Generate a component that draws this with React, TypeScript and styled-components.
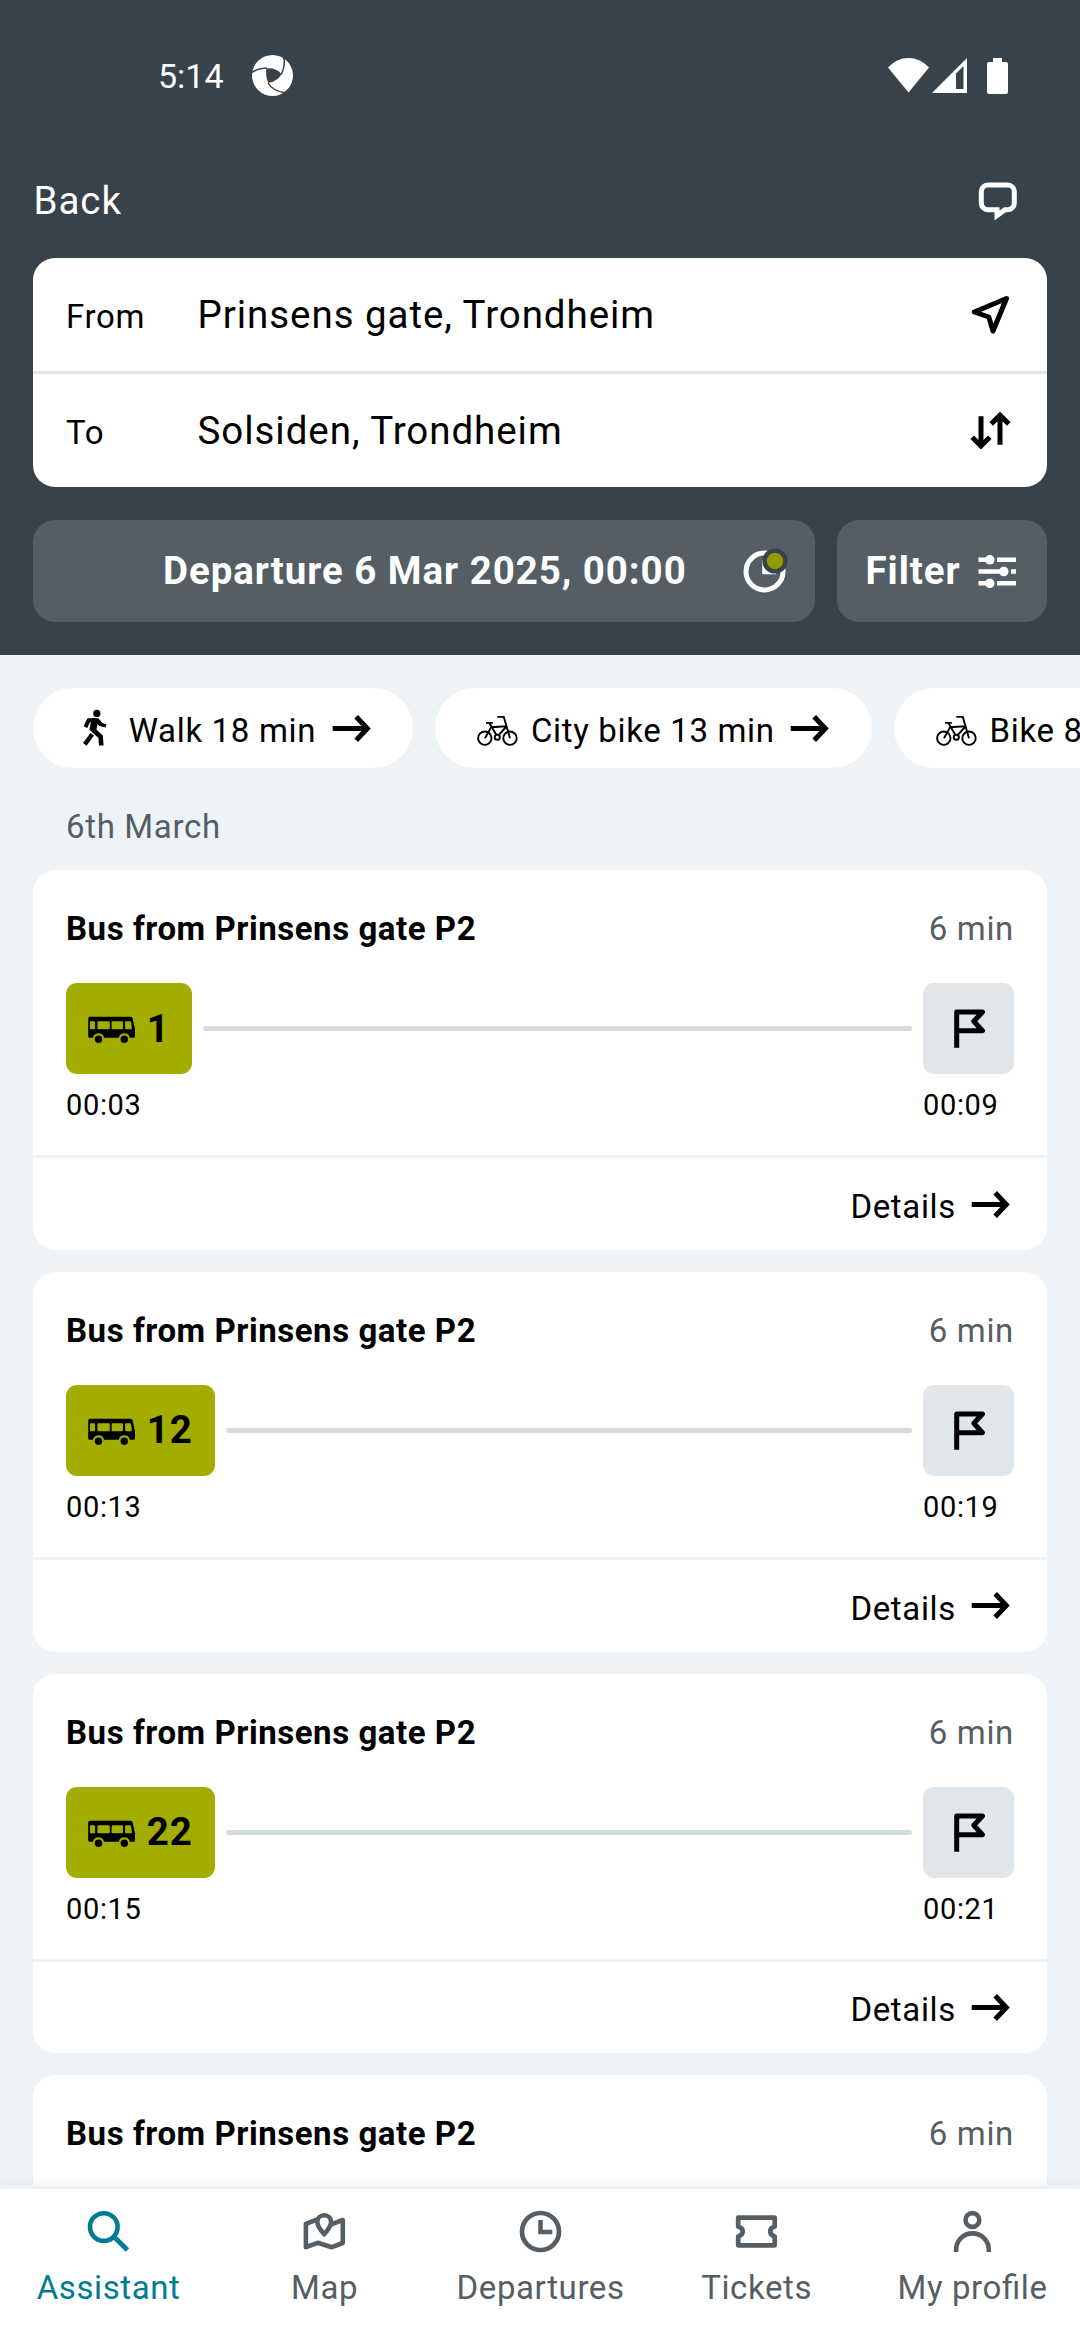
import React from "react";
import styled, { createGlobalStyle } from "styled-components";

const color = {
  header: "#38424a",
  headerButton: "#555e65",
  page: "#edf3f6",
  card: "#ffffff",
  text: "#000000",
  muted: "#555e65",
  line: "#e1e6ea",
  leg: "#d4dbde",
  bus: "#a2ad00",
  active: "#007c92",
};

const GlobalStyle = createGlobalStyle`
  * { box-sizing: border-box; }
  body {
    margin: 0;
    background: ${color.page};
    font-family: Roboto, "Liberation Sans", sans-serif;
    color: ${color.text};
  }
`;

/* ---------- icons ---------- */

const IconSvg = styled.svg`
  width: 55px;
  height: 55px;
  flex: none;
  display: block;
  fill: none;
  stroke: currentColor;
  stroke-width: 5;
`;

function Icon({ children }: { children: React.ReactNode }) {
  return <IconSvg viewBox="0 0 55 55">{children}</IconSvg>;
}

const ChatIcon = () => (
  <Icon>
    <path d="M34 35.7H36.8a6.5 6.5 0 0 0 6.5-6.5V17.5a6.5 6.5 0 0 0-6.5-6.5H16.8a6.5 6.5 0 0 0-6.5 6.5v11.7a6.5 6.5 0 0 0 6.5 6.5h9.2v5.8z" />
  </Icon>
);

const LocationIcon = () => (
  <Icon>
    <path strokeLinejoin="round" d="M43.5 11.5L11.3 25 25.8 30 30 44z" />
  </Icon>
);

const SwapIcon = () => (
  <Icon>
    <path d="M18 13.3V43M9.2 34.3L18 43l8.8-8.7M37 41.7V12.2M28.2 20.9L37 12.2l8.8 8.7" />
  </Icon>
);

const ClockIcon = ({ dot }: { dot?: boolean }) => (
  <Icon>
    <circle cx="27.5" cy="27.5" r="18.5" strokeWidth={dot ? 5 : 4.7} />
    <path d="M27.5 16v12h11.8" strokeWidth="4.5" />
    {dot && (
      <circle cx="38" cy="17" r="10.4" fill="#929b00" stroke={color.header} strokeWidth="4.4" />
    )}
  </Icon>
);

const FilterIcon = () => (
  <Icon>
    <path d="M8.5 15.8H19M27 15.8h19M8.5 27.5H33M41 27.5h5M8.5 39.3H19M27 39.3h19" strokeWidth="4.6" />
    <g fill="currentColor" stroke="none">
      <circle cx="19.8" cy="15.8" r="4.8" />
      <circle cx="33.8" cy="27.5" r="4.8" />
      <circle cx="19.8" cy="39.3" r="4.8" />
    </g>
  </Icon>
);

const ArrowIcon = () => (
  <Icon>
    <path d="M8.7 27.5H43M32.2 15.8L43.3 27.5 32.2 39.2" />
  </Icon>
);

const WalkIcon = () => (
  <Icon>
    <circle cx="30.8" cy="12.4" r="3.6" fill="currentColor" stroke="none" />
    <path d="M19.4 26.2l3.4-7h7" strokeWidth="4" />
    <path d="M25.6 17.3h6.8l4.2 5 3.9.9-1 3.3-6-1.6-1.9-1.7-1.2 5.4 6.4 6 .8 9.8h-4.6l-.6-7.4-9-8.3z" fill="currentColor" stroke="none" />
    <path d="M26.2 33.2l-7.4 10.2" strokeWidth="4.4" />
  </Icon>
);

const BikeIcon = () => (
  <Icon>
    <g strokeWidth="1.9">
      <circle cx="16.8" cy="37.2" r="6.7" />
      <circle cx="42" cy="37.2" r="6.7" />
      <circle cx="29.3" cy="36.2" r="2.6" />
      <path d="M18 21.9h6.8M21.4 22l7 12M23.4 25.6l-6.4 11.6M23 26.2l14.8-1M38 26l-8 8.800M29.3 15.9h6.5L42 37.2" />
    </g>
  </Icon>
);

const BusIcon = () => (
  <Icon>
    <path
      fill="currentColor"
      stroke="none"
      fillRule="evenodd"
      d="M6 15.7h40.4q2 0 2.3 1.9l2.3 11v6.6q0 1.6-1.6 1.6h-3.6a5.6 5.6 0 0 0-11 0H20a5.6 5.6 0 0 0-11 0H5.8q-1.6 0-1.6-1.6V17.5q0-1.8 1.8-1.8zM6.9 20.3q-1 0-1 1v5.9q0 1 1 1h3.2q1 0 1-1v-5.9q0-1-1-1zM14.4 20.3q-1 0-1 1v5.9q0 1 1 1h10.4q1 0 1-1v-5.9q0-1-1-1zM28.6 20.3q-1 0-1 1v5.9q0 1 1 1h9.4q1 0 1-1v-5.9q0-1-1-1zM42.1 20.3q-1 0-1 1v5.9q0 1 1 1h4.9q1.1 0 .9-1l-.9-5.9q-.1-1-1.1-1z"
    />
    <g fill="currentColor" stroke="none">
      <circle cx="14.5" cy="38.2" r="3.7" />
      <circle cx="40.3" cy="38.2" r="3.7" />
    </g>
  </Icon>
);

const FlagIcon = () => (
  <Icon>
    <path strokeLinejoin="round" d="M15.7 46.7V11H41.5L32.8 20.3l8.7 9.4H15.7" />
  </Icon>
);

const SearchIcon = () => (
  <Icon>
    <circle cx="22.8" cy="23" r="13.8" strokeWidth="4.6" />
    <path d="M33 32.8L46.4 46" strokeWidth="4.8" />
  </Icon>
);

const MapIcon = () => (
  <Icon>
    <g strokeWidth="4.6" strokeLinejoin="round">
      <path d="M20.6 15.3L8.9 19.9v23.3l11.8-4.4 14.1 4.4 11-4.2V16l-11.6 4.3" />
      <path d="M27.2 11.2c3.8 0 6.9 2.8 6.9 6.6 0 4.6-3.2 8.4-6.9 12.4-3.7-4-6.9-7.8-6.9-12.4 0-3.8 3.1-6.6 6.9-6.6z" />
    </g>
  </Icon>
);

const TicketIcon = () => (
  <Icon>
    <path
      strokeWidth="4.7"
      strokeLinejoin="round"
      d="M9.2 13.7h36.5v8.9c-2.7.8-4.5 2.5-4.5 4.9s1.8 4.1 4.5 4.9V41.3H9.2v-8.9c2.7-.8 4.5-2.5 4.5-4.9s-1.8-4.1-4.5-4.9z"
    />
  </Icon>
);

const ProfileIcon = () => (
  <Icon>
    <g strokeWidth="4.6">
      <circle cx="27.4" cy="16" r="6.9" />
      <path d="M11.1 47.9v-2.2a16.35 16.35 0 0 1 32.7 0v2.2" />
    </g>
  </Icon>
);

/* ---------- status bar ---------- */

const StatusBar = styled.div`
  height: 151px;
  padding: 0 72px 0 158px;
  display: flex;
  align-items: center;
  color: #fff;
`;

const Clock = styled.span`
  font-size: 34px;
  line-height: 40px;
  padding-top: 1px;
  width: 94px;
`;

const StatusIcons = styled.div`
  margin-left: auto;
  display: flex;
  align-items: center;
`;

const Glyph = styled.svg<{ $w: number; $h: number; $gap?: number }>`
  display: block;
  width: ${(p) => p.$w}px;
  height: ${(p) => p.$h}px;
  margin-left: ${(p) => p.$gap ?? 0}px;
  fill: #fff;
`;

/* ---------- header ---------- */

const Screen = styled.div`
  width: 1080px;
  height: 2340px;
  display: flex;
  flex-direction: column;
  overflow: hidden;
  background: ${color.page};
`;

const Header = styled.header`
  flex: none;
  height: 655px;
  background: ${color.header};
`;

const TitleBar = styled.div`
  height: 107px;
  padding: 0 54px 7px 33.5px;
  display: flex;
  align-items: center;
  justify-content: space-between;
  color: #fff;
`;

const BodyText = styled.span<{ $bold?: boolean }>`
  font-size: 38.5px;
  line-height: 50px;
  letter-spacing: 0.95px;
  font-weight: ${(p) => (p.$bold ? 700 : 400)};
  white-space: nowrap;
`;

const SmallText = styled.span<{ $bold?: boolean; $muted?: boolean; $drop?: number }>`
  font-size: 33px;
  line-height: 51.5px;
  letter-spacing: ${(p) => (p.$bold ? 0.55 : 0.66)}px;
  font-weight: ${(p) => (p.$bold ? 700 : 400)};
  color: ${(p) => (p.$muted ? color.muted : "inherit")};
  padding-top: ${(p) => p.$drop ?? 0}px;
  white-space: nowrap;
`;

const SearchBox = styled.div`
  margin: 0 33px;
  border-radius: 22px;
  background: ${color.card};
`;

const SearchRow = styled.div`
  height: 113px;
  padding: 0 29px 0 33px;
  display: grid;
  grid-template-columns: 131.5px 1fr 55px;
  align-items: center;

  & + & {
    height: 116px;
    border-top: 3px solid ${color.line};
  }
`;

const HeaderButtons = styled.div`
  margin: 33px 33px 0;
  display: flex;
  gap: 22px;
`;

const HeaderButton = styled.button<{ $grow?: boolean }>`
  height: 102px;
  border: 0;
  border-radius: 22px;
  background: ${color.headerButton};
  color: #fff;
  font-family: inherit;
  display: flex;
  align-items: center;
  justify-content: space-between;
  flex: ${(p) => (p.$grow ? "1" : "0 0 210px")};
  padding: ${(p) => (p.$grow ? "0 23px 0 130px" : "0 22.5px 0 28.5px")};
`;

/* ---------- results ---------- */

const Results = styled.main`
  flex: 1;
  min-height: 0;
  overflow: hidden;
  padding-top: 33px;
`;

const ChipStrip = styled.div`
  padding-left: 33px;
  display: flex;
  gap: 22px;
  overflow: hidden;
`;

const Chip = styled.div`
  flex: none;
  height: 80px;
  padding: 0 34.5px 0 33px;
  border-radius: 40px;
  background: ${color.card};
  display: flex;
  align-items: center;
  gap: 7.7px;
`;

const DateHeading = styled.div`
  height: 102px;
  padding: 15px 66px 0;
  display: flex;
  align-items: center;
`;

const Card = styled.article`
  height: 379.75px;
  margin: 0 33px 22px;
  border-radius: 22px;
  background: ${color.card};
`;

const CardTop = styled.div`
  height: 288px;
  padding: 33px 33px 0;
  border-bottom: 3px solid ${color.page};
`;

const CardTitle = styled.div`
  display: flex;
  justify-content: space-between;
  margin-bottom: 28.5px;
`;

const Route = styled.div`
  display: flex;
  align-items: center;
  gap: 11px;
`;

const LineBadge = styled.div`
  height: 91px;
  padding: 0 22.5px 0 18px;
  border-radius: 11px;
  background: ${color.bus};
  display: flex;
  align-items: center;
  gap: 7.8px;
`;

const Track = styled.div`
  flex: 1;
  height: 5px;
  border-radius: 3px;
  background: ${color.leg};
`;

const EndBadge = styled.div`
  width: 91px;
  height: 91px;
  border-radius: 11px;
  background: ${color.line};
  display: flex;
  align-items: center;
  justify-content: center;
`;

const Times = styled.div`
  margin-top: 11px;
  display: grid;
  grid-template-columns: 1fr 91px;
  font-size: 29px;
  line-height: 40px;
  letter-spacing: 0.65px;
`;

const CardFooter = styled.div`
  height: 92px;
  padding-right: 29px;
  display: flex;
  align-items: center;
  justify-content: flex-end;
  gap: 7px;
`;

/* ---------- bottom navigation ---------- */

const BottomNav = styled.nav`
  position: relative;
  flex: none;
  height: 154px;
  padding-top: 15px;
  border-top: 3px solid ${color.page};
  background: #fff;
  box-shadow: 0 0 12px rgba(0, 0, 0, 0.07);
  display: grid;
  grid-template-columns: repeat(5, 1fr);
`;

const Tab = styled.div<{ $active?: boolean }>`
  display: flex;
  flex-direction: column;
  align-items: center;
  gap: 9px;
  color: ${(p) => (p.$active ? color.active : color.muted)};
`;

const TabLabel = styled.span`
  padding-left: 1.2px;
  font-size: 33px;
  line-height: 40px;
  letter-spacing: 0.6px;
  white-space: nowrap;
  font-feature-settings: "liga" 1;
`;

type Leg = { line: string; start: string; end: string };
type Trip = { id: number; leg?: Leg };

const trips: Trip[] = [
  { id: 1, leg: { line: "1", start: "00:03", end: "00:09" } },
  { id: 2, leg: { line: "12", start: "00:13", end: "00:19" } },
  { id: 3, leg: { line: "22", start: "00:15", end: "00:21" } },
  { id: 4 },
];

function TripCard({ leg }: Trip) {
  return (
    <Card>
      <CardTop>
        <CardTitle>
          <SmallText $bold>Bus from Prinsens gate P2</SmallText>
          <SmallText $muted>6 min</SmallText>
        </CardTitle>
        {leg && (
          <>
            <Route>
              <LineBadge>
                <BusIcon />
                <BodyText $bold>{leg.line}</BodyText>
              </LineBadge>
              <Track />
              <EndBadge>
                <FlagIcon />
              </EndBadge>
            </Route>
            <Times>
              <span>{leg.start}</span>
              <span>{leg.end}</span>
            </Times>
          </>
        )}
      </CardTop>
      {leg && (
        <CardFooter>
          <SmallText $drop={5}>Details</SmallText>
          <ArrowIcon />
        </CardFooter>
      )}
    </Card>
  );
}

const chips = [
  { icon: <WalkIcon />, label: "Walk 18 min" },
  { icon: <BikeIcon />, label: "City bike 13 min" },
  { icon: <BikeIcon />, label: "Bike 8 min" },
];

const tabs = [
  { icon: <SearchIcon />, label: "Assistant", active: true },
  { icon: <MapIcon />, label: "Map" },
  { icon: <ClockIcon />, label: "Departures" },
  { icon: <TicketIcon />, label: "Tickets" },
  { icon: <ProfileIcon />, label: "My profile" },
];

export default function App() {
  return (
    <Screen>
      <GlobalStyle />
      <Header>
        <StatusBar>
          <Clock>5:14</Clock>
          <Glyph $w={41} $h={41} viewBox="0 0 41 41">
            <circle cx="20.5" cy="20.5" r="20.5" />
            <path d="M14.4 13.5Q24 12.5 29.6 19.2 25 26.5 16.2 28 13.2 20.5 14.4 13.5z" fill={color.header} />
            <g fill="none" stroke={color.header} strokeWidth="1.5">
              <path d="M15 13.3Q7 12.3 0 17.5" />
              <path d="M29.3 19.2Q33.5 11 31.8 1" />
              <path d="M16 28Q20.5 36 33.5 38" />
            </g>
            <path d="M26 41q4.5-1.5 6.5-4L38 33v8z" fill={color.header} />
          </Glyph>
          <StatusIcons>
            <Glyph $w={41} $h={35} viewBox="0 0 41 35">
              <path d="M0 9.5Q8.500 0 20.5 0T41 9.500L20.5 34.5z" />
            </Glyph>
            <Glyph $w={35} $h={35} $gap={3} viewBox="0 0 35 35">
              <path fillRule="evenodd" d="M35 0v35H0zM24 15.5v15.500h7.500V8z" />
            </Glyph>
            <Glyph $w={21} $h={36} $gap={20} viewBox="0 0 21 36">
              <path d="M6 0h9v4h4q2 0 2 2v28q0 2-2 2H2q-2 0-2-2V6q0-2 2-2h4z" />
            </Glyph>
          </StatusIcons>
        </StatusBar>
        <TitleBar>
          <BodyText>Back</BodyText>
          <ChatIcon />
        </TitleBar>
        <SearchBox>
          <SearchRow>
            <SmallText $drop={4}>From</SmallText>
            <BodyText>Prinsens gate, Trondheim</BodyText>
            <LocationIcon />
          </SearchRow>
          <SearchRow>
            <SmallText $drop={4}>To</SmallText>
            <BodyText>Solsiden, Trondheim</BodyText>
            <SwapIcon />
          </SearchRow>
        </SearchBox>
        <HeaderButtons>
          <HeaderButton $grow>
            <BodyText $bold>Departure 6 Mar 2025, 00:00</BodyText>
            <ClockIcon dot />
          </HeaderButton>
          <HeaderButton>
            <BodyText $bold>Filter</BodyText>
            <FilterIcon />
          </HeaderButton>
        </HeaderButtons>
      </Header>
      <Results>
        <ChipStrip>
          {chips.map((c) => (
            <Chip key={c.label}>
              {c.icon}
              <SmallText $drop={5}>{c.label}</SmallText>
              <ArrowIcon />
            </Chip>
          ))}
        </ChipStrip>
        <DateHeading>
          <SmallText $muted>6th March</SmallText>
        </DateHeading>
        {trips.map((t) => (
          <TripCard key={t.id} {...t} />
        ))}
      </Results>
      <BottomNav>
        {tabs.map((t) => (
          <Tab key={t.label} $active={t.active}>
            {t.icon}
            <TabLabel>{t.label}</TabLabel>
          </Tab>
        ))}
      </BottomNav>
    </Screen>
  );
}
